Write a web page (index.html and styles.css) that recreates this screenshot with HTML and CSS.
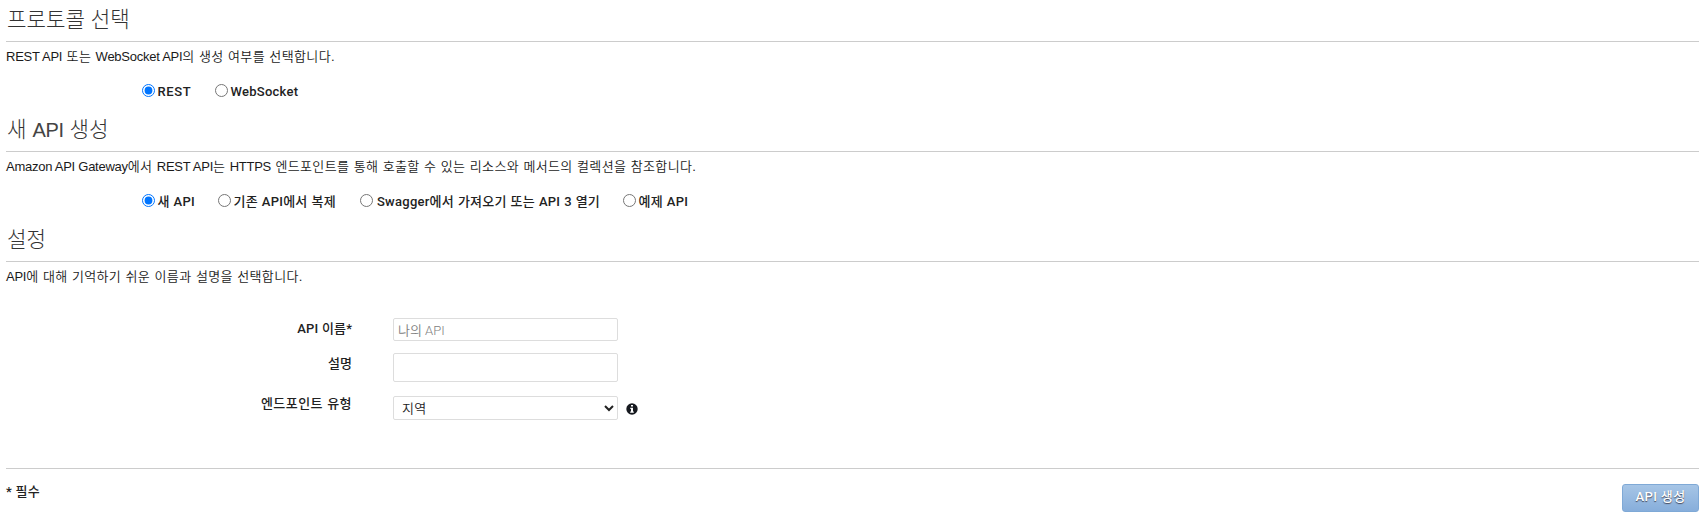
FILE: index.html
```html
<!DOCTYPE html>
<html lang="ko">
<head>
<meta charset="utf-8">
<title>API 생성</title>
<link rel="stylesheet" href="styles.css">
</head>
<body>
<form class="page">
  <section class="section">
    <h2 class="heading">프로토콜 선택</h2>
    <p class="intro"><span class="latin">REST API</span> 또는 <span class="latin">WebSocket API</span>의 생성 여부를 선택합니다.</p>
    <div class="choices">
      <label class="choice rest"><input type="radio" name="protocol" checked><span>REST</span></label>
      <label class="choice"><input type="radio" name="protocol"><span>WebSocket</span></label>
    </div>
  </section>
  <section class="section">
    <h2 class="heading">새 <span class="latin">API</span> 생성</h2>
    <p class="intro"><span class="latin">Amazon API Gateway</span>에서 <span class="latin">REST API</span>는 <span class="latin">HTTPS</span> 엔드포인트를 통해 호출할 수 있는 리소스와 메서드의 컬렉션을 참조합니다.</p>
    <div class="choices">
      <label class="choice new"><input type="radio" name="source" checked><span>새 API</span></label>
      <label class="choice clone"><input type="radio" name="source"><span>기존 API에서 복제</span></label>
      <label class="choice swagger"><input type="radio" name="source"><span>Swagger에서 가져오기 또는 API 3 열기</span></label>
      <label class="choice"><input type="radio" name="source"><span>예제 API</span></label>
    </div>
  </section>
  <section class="settings">
    <h2 class="heading">설정</h2>
    <p class="intro"><span class="latin">API</span>에 대해 기억하기 쉬운 이름과 설명을 선택합니다.</p>
    <div class="fields">
      <label class="label" for="name">API 이름*</label>
      <input class="control name" id="name" type="text" placeholder="나의 API">
      <label class="label" for="desc">설명</label>
      <textarea class="control desc" id="desc"></textarea>
      <label class="label endpoint" for="type">엔드포인트 유형</label>
      <div class="with-info">
        <select class="control type" id="type"><option>지역</option></select>
        <svg class="info" viewBox="0 0 12 12"><circle cx="6" cy="6" r="5.7" fill="#16191f"/><path d="M5 2h2v1.6H5zM4.3 4.7H7v3.7h.8v1.3H4.2V8.4H5V6h-.7z" fill="#fff"/></svg>
      </div>
    </div>
  </section>
  <footer class="footer">
    <span class="required">* 필수</span>
    <button class="submit" type="button">API 생성</button>
  </footer>
</form>
</body>
</html>
```
FILE: styles.css
```css
* { box-sizing: border-box; }
body {
  margin: 0;
  background: #fff;
  color: #222;
  font: 13px/18px Roboto, "Noto Sans CJK KR", sans-serif;
}
.page { padding: 0 5px 0 6px; }
.section { height: 110px; }
.settings { height: 248px; }
.heading {
  height: 42px;
  margin: 0;
  padding: 7px 0 0 1px;
  border-bottom: 1px solid #ccc;
  color: #333;
  font: 300 21.2px/25px "Liberation Sans", "Noto Sans CJK KR", sans-serif;
}
.heading .latin { font-size: 20px; color: #444; letter-spacing: -0.3px; }
.intro {
  height: 35px;
  margin: 0;
  padding-top: 6px;
  color: #1a1a1a;
  font-family: "Liberation Sans", "Noto Sans CJK KR", sans-serif;
  font-weight: 350;
  letter-spacing: 0.36px;
  word-spacing: 0.4px;
  white-space: nowrap;
}
.intro .latin { letter-spacing: -0.26px; word-spacing: 0; }
.choices { display: flex; padding-left: 136px; }
.choice {
  display: flex;
  align-items: center;
  gap: 2.5px;
  height: 28px;
  font-weight: 500;
  letter-spacing: 0.25px;
  word-spacing: 0.4px;
  white-space: nowrap;
}
.choice input { width: 13px; height: 13px; margin: 0 0 2px; flex: none; }
.choice span { padding-top: 1px; }
.rest { width: 73px; letter-spacing: 0.6px; }
.new { width: 76px; }
.clone { width: 142px; }
.swagger { width: 263px; gap: 4px; }
.swagger, .clone { flex: none; }
.fields {
  display: grid;
  grid-template-columns: 346px auto;
  column-gap: 41px;
  grid-template-rows: 35px 43px 24px;
  align-items: start;
  padding-top: 21px;
}
.label { text-align: right; font-weight: 500; padding-top: 2px; letter-spacing: 0.1px; word-spacing: 0.5px; }
.endpoint { padding-top: 0; margin-top: -1px; letter-spacing: 0.45px; }
.control {
  display: block;
  width: 225px;
  margin: 0;
  border: 1px solid #ddd;
  border-radius: 2px;
  background: #fff;
  color: #222;
  font: inherit;
  font-weight: 350;
  resize: none;
}
.control::placeholder { color: #808080; opacity: 1; }
.name { height: 23px; padding: 2px 4px 0; }
.desc { height: 29px; }
.type { height: 24px; padding: 0 0 0 4px; letter-spacing: 0.3px; }
.with-info { display: flex; gap: 8px; }
.info { width: 12px; height: 12px; margin-top: 7px; }
.footer {
  display: flex;
  justify-content: space-between;
  align-items: flex-start;
  border-top: 1px solid #ccc;
  font-weight: 500;
}
.required { padding-top: 14px; letter-spacing: 0.3px; }
.submit {
  width: 77px;
  height: 28px;
  margin-top: 15px;
  padding: 0 0 3px;
  border: 1px solid #7fa9d6;
  border-radius: 3px;
  background: linear-gradient(#a6c5e6, #87aedb);
  color: #fff;
  font: 500 13px/18px Roboto, "Noto Sans CJK KR", sans-serif;
  letter-spacing: 0.4px;
  text-shadow: 0 1px 1px #445;
}
```
